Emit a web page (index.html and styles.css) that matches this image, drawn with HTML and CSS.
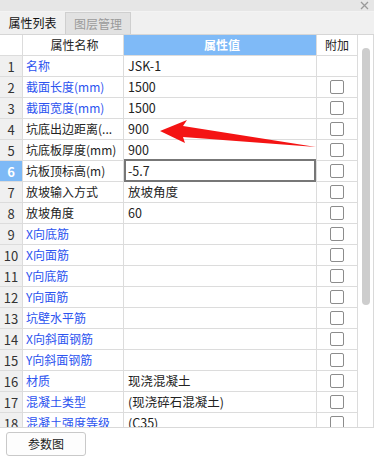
FILE: index.html
```html
<!DOCTYPE html>
<html lang="zh">
<head>
<meta charset="utf-8">
<link rel="stylesheet" href="styles.css">
</head>
<body>
<div class="panel">
  <div class="titlebar">
    <svg class="close" width="9" height="9" viewBox="0 0 9 9"><path d="M1 1L8 8M8 1L1 8" stroke="#9a9a9a" stroke-width="1.3"/></svg>
  </div>
  <div class="tabs">
    <div class="tab active">属性列表</div>
    <div class="tab">图层管理</div>
  </div>
  <div class="gridwrap">
    <div class="grid">
      <div class="row head">
        <div class="c num"></div>
        <div class="c name center">属性名称</div>
        <div class="c val hval">属性值</div>
        <div class="c add center">附加</div>
      </div>
      <div class="row"><div class="c num">1</div><div class="c name blue">名称</div><div class="c val">JSK-1</div><div class="c add"></div></div>
      <div class="row"><div class="c num">2</div><div class="c name blue">截面长度(mm)</div><div class="c val">1500</div><div class="c add"><span class="cb"></span></div></div>
      <div class="row"><div class="c num">3</div><div class="c name blue">截面宽度(mm)</div><div class="c val">1500</div><div class="c add"><span class="cb"></span></div></div>
      <div class="row"><div class="c num">4</div><div class="c name">坑底出边距离(...</div><div class="c val">900</div><div class="c add"><span class="cb"></span></div></div>
      <div class="row"><div class="c num">5</div><div class="c name">坑底板厚度(mm)</div><div class="c val">900</div><div class="c add"><span class="cb"></span></div></div>
      <div class="row"><div class="c num sel">6</div><div class="c name">坑板顶标高(m)</div><div class="c val selval">-5.7</div><div class="c add"><span class="cb"></span></div></div>
      <div class="row"><div class="c num">7</div><div class="c name">放坡输入方式</div><div class="c val">放坡角度</div><div class="c add"><span class="cb"></span></div></div>
      <div class="row"><div class="c num">8</div><div class="c name">放坡角度</div><div class="c val">60</div><div class="c add"><span class="cb"></span></div></div>
      <div class="row"><div class="c num">9</div><div class="c name blue">X向底筋</div><div class="c val"></div><div class="c add"><span class="cb"></span></div></div>
      <div class="row"><div class="c num">10</div><div class="c name blue">X向面筋</div><div class="c val"></div><div class="c add"><span class="cb"></span></div></div>
      <div class="row"><div class="c num">11</div><div class="c name blue">Y向底筋</div><div class="c val"></div><div class="c add"><span class="cb"></span></div></div>
      <div class="row"><div class="c num">12</div><div class="c name blue">Y向面筋</div><div class="c val"></div><div class="c add"><span class="cb"></span></div></div>
      <div class="row"><div class="c num">13</div><div class="c name blue">坑壁水平筋</div><div class="c val"></div><div class="c add"><span class="cb"></span></div></div>
      <div class="row"><div class="c num">14</div><div class="c name blue">X向斜面钢筋</div><div class="c val"></div><div class="c add"><span class="cb"></span></div></div>
      <div class="row"><div class="c num">15</div><div class="c name blue">Y向斜面钢筋</div><div class="c val"></div><div class="c add"><span class="cb"></span></div></div>
      <div class="row"><div class="c num">16</div><div class="c name blue">材质</div><div class="c val">现浇混凝土</div><div class="c add"><span class="cb"></span></div></div>
      <div class="row"><div class="c num">17</div><div class="c name blue">混凝土类型</div><div class="c val">(现浇碎石混凝土)</div><div class="c add"><span class="cb"></span></div></div>
      <div class="row"><div class="c num">18</div><div class="c name blue">混凝土强度等级</div><div class="c val">(C35)</div><div class="c add"><span class="cb"></span></div></div>
    </div>
    <div class="scroll"><div class="thumb"></div></div>
  </div>
  <div class="footer">
    <button class="btn">参数图</button>
  </div>
  <svg class="arrow" width="374" height="458" viewBox="0 0 374 458">
    <polygon points="160,131 187,120 183,126 316,147 183,137 185,143" fill="#f41414"/>
  </svg>
</div>
</body>
</html>
```

FILE: styles.css
```css
* { box-sizing: border-box; }
html, body { margin: 0; padding: 0; }
body {
  width: 374px;
  height: 458px;
  overflow: hidden;
  background: #ffffff;
  font-family: "Noto Sans CJK SC", "Microsoft YaHei", sans-serif;
  font-size: 12px;
  color: #222;
}
.panel { position: relative; width: 374px; height: 458px; }
.titlebar {
  height: 12px;
  background: #e6e6e6;
  border-bottom: 1px solid #f3f3f3;
  display: flex;
  justify-content: flex-end;
  align-items: center;
  padding-right: 5px;
}
.close { display: block; }
.tabs {
  height: 23px;
  background: #f0f0f0;
  border-bottom: 1px solid #d6d6d6;
  display: flex;
  align-items: stretch;
}
.tab {
  width: 65px;
  display: flex;
  align-items: center;
  justify-content: center;
  line-height: 1;
  color: #111;
}
.tab + .tab {
  width: 66px;
  background: #e2e2e2;
  border: 1px solid #cfcfcf;
  border-bottom: none;
  color: #9a9a9a;
}
.gridwrap {
  display: flex;
  height: 393px;
  border-bottom: 1px solid #d9d9d9;
  border-right: 1px solid #d9d9d9;
  overflow: hidden;
}
.grid { width: 358px; }
.row {
  display: grid;
  grid-template-columns: 23px 101px 193px 41px;
  height: 21px;
}
.c {
  border-right: 1px solid #dcdcdc;
  border-bottom: 1px solid #dcdcdc;
  height: 21px;
  display: flex;
  align-items: center;
  white-space: nowrap;
  overflow: hidden;
  line-height: 1;
}
.num {
  background: #f0f0f0;
  justify-content: center;
  color: #333;
  font-size: 13px;
}
.head .num { background: #ffffff; }
.num.sel { background: #7db9f6; color: #fff; font-weight: 700; }
.name { padding-left: 3px; }
.val { padding-left: 4px; position: relative; overflow: visible; font-size: 12.5px; }
.center { justify-content: center; }
.hval {
  background: #7fbaf7;
  color: #fff;
  justify-content: center;
  font-weight: 700;
  font-size: 12px;
}
.blue { color: #2c53ef; }
.add { justify-content: center; }
.cb {
  width: 14px;
  height: 14px;
  border: 1.5px solid #8c8c8c;
  border-radius: 2px;
  display: block;
  background: #fff;
}
.selval::after {
  content: "";
  position: absolute;
  top: -2px;
  left: 0;
  right: 0;
  bottom: -1px;
  border: 2px solid #777;
}
.scroll {
  width: 15px;
  background: #fff;
  position: relative;
}
.thumb {
  position: absolute;
  left: 4px;
  top: 13px;
  width: 8px;
  height: 257px;
  background: #cdcdcd;
  border-radius: 4px;
}
.footer {
  padding: 4px 6px;
}
.btn {
  width: 80px;
  height: 24px;
  font-family: "Noto Sans CJK SC", sans-serif;
  font-size: 12px;
  color: #222;
  background: #fdfdfd;
  border: 1px solid #c9c9c9;
  border-radius: 3px;
  padding: 0;
  line-height: 1;
}
.arrow {
  position: absolute;
  left: 0;
  top: 0;
  pointer-events: none;
}
```
